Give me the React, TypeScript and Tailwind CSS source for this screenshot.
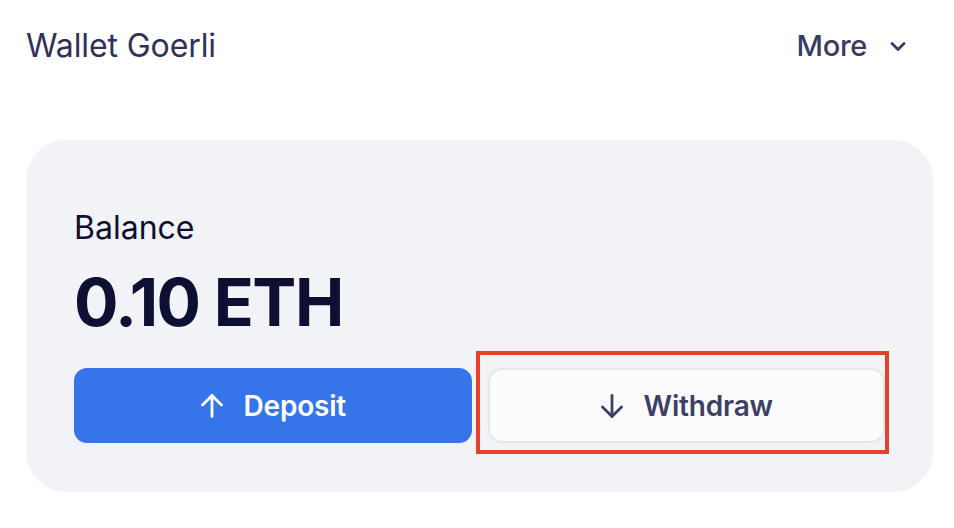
import React from 'react';

const ArrowIcon = ({ down = false, className = '' }: { down?: boolean; className?: string }) => (
  <svg
    width="24"
    height="24"
    viewBox="0 0 24 24"
    fill="none"
    stroke="currentColor"
    strokeWidth="2.8"
    strokeLinecap="round"
    strokeLinejoin="round"
    className={className}
  >
    {down ? (
      <>
        <path d="M12 1.5v21" />
        <path d="M2.5 13l9.5 9.5 9.5-9.5" />
      </>
    ) : (
      <>
        <path d="M12 22.5v-21" />
        <path d="M2.5 11L12 1.5l9.5 9.5" />
      </>
    )}
  </svg>
);

export default function App() {
  return (
    <div className="w-[954px] h-[528px] bg-white pl-[26px] pr-[21px] font-['Inter','Noto_Sans',sans-serif] overflow-hidden">
      {/* Header */}
      <div className="flex items-center justify-between h-[92px]">
        <h1 className="text-[32px] leading-[38px] text-[#2f3158] tracking-[-0.1px]">Wallet Goerli</h1>
        <button className="flex items-center gap-[23px] pr-[27px] text-[#393b63]">
          <span className="text-[29px] leading-[36px] font-medium tracking-[-0.3px]">More</span>
          <svg width="16" height="9" viewBox="0 0 16 9" fill="none" stroke="currentColor" strokeWidth="2.8" strokeLinecap="round" strokeLinejoin="round">
            <path d="M2 1.5l6 6 6-6" />
          </svg>
        </button>
      </div>

      {/* Balance card */}
      <div className="mt-[48px] rounded-[40px] bg-[#f2f3f7] px-[48px] pt-[69px] pb-[49px]">
        <p className="text-[32px] leading-[38px] text-[#0d0f33]">Balance</p>
        <p className="mt-[22px] text-[66px] leading-[66px] font-bold text-[#0d0f33] tracking-[-1.5px]">0.10 ETH</p>

        <div className="mt-[33px] grid grid-cols-2 gap-[16px]">
          <button className="h-[75px] rounded-[13px] bg-[#3574e9] text-white flex items-center justify-center gap-[20px]">
            <ArrowIcon />
            <span className="text-[28px] font-semibold tracking-[-0.2px]">Deposit</span>
          </button>

          <div className="relative">
            <button className="w-full h-[75px] rounded-[14px] bg-[#fbfbfc] border-2 border-[#e6e7ec] text-[#3d3f66] flex items-center justify-center gap-[20px]">
              <ArrowIcon down />
              <span className="text-[28px] font-semibold tracking-[-0.2px]">Withdraw</span>
            </button>
            <div className="absolute left-[-12px] top-[-17px] right-[-4px] bottom-[-11px] border-[4px] border-[#e8412a] pointer-events-none" />
          </div>
        </div>
      </div>
    </div>
  );
}
